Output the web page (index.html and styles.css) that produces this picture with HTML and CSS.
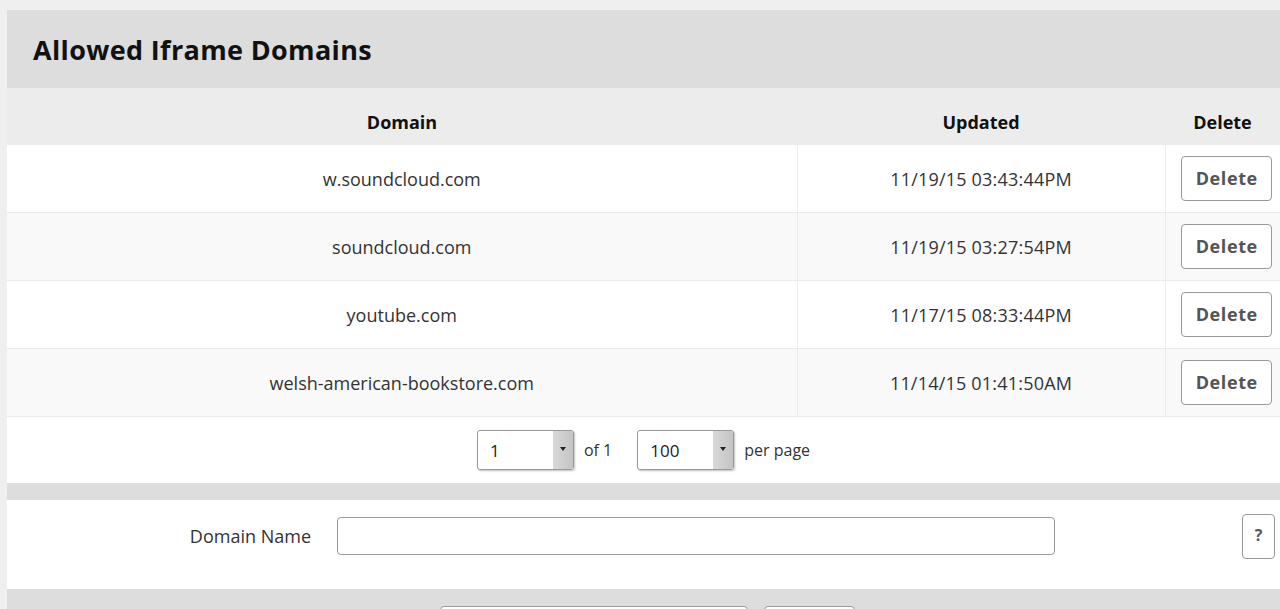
FILE: index.html
```html
<!DOCTYPE html>
<html lang="en">
<head>
    <meta charset="UTF-8">
    <meta name="viewport" content="width=device-width, initial-scale=1.0">
    <title>Allowed Iframe Domains</title>
    <link rel="stylesheet" href="styles.css">
</head>
<body>
    <div class="panel">
        <div class="panel-head">
            <h1>Allowed Iframe Domains</h1>
        </div>
        <table class="domain-table">
            <thead>
                <tr>
                    <th class="col-domain">Domain</th>
                    <th class="col-updated">Updated</th>
                    <th class="col-delete">Delete</th>
                </tr>
            </thead>
            <tbody>
                <tr>
                    <td>w.soundcloud.com</td>
                    <td>11/19/15 03:43:44PM</td>
                    <td><button class="btn">Delete</button></td>
                </tr>
                <tr>
                    <td>soundcloud.com</td>
                    <td>11/19/15 03:27:54PM</td>
                    <td><button class="btn">Delete</button></td>
                </tr>
                <tr>
                    <td>youtube.com</td>
                    <td>11/17/15 08:33:44PM</td>
                    <td><button class="btn">Delete</button></td>
                </tr>
                <tr>
                    <td>welsh-american-bookstore.com</td>
                    <td>11/14/15 01:41:50AM</td>
                    <td><button class="btn">Delete</button></td>
                </tr>
            </tbody>
        </table>
        <div class="pager">
            <div class="select"><span>1</span><span class="arrow"></span></div>
            <span class="pager-text">of 1</span>
            <div class="select"><span>100</span><span class="arrow"></span></div>
            <span class="pager-text">per page</span>
        </div>
        <div class="spacer"></div>
        <div class="form-row">
            <label for="domain-name">Domain Name</label>
            <input type="text" id="domain-name">
            <button class="btn btn-help">?</button>
        </div>
        <div class="actions">
            <div class="action-box wide"></div>
            <div class="action-box narrow"></div>
        </div>
    </div>
</body>
</html>
```

FILE: styles.css
```css
body {
    font-family: "Open Sans", Arial, sans-serif;
    background-color: #efefef;
    color: #333;
    margin: 0;
    padding: 10px 0 0 7px;
    overflow: hidden;
}
.panel {
    background-color: #fff;
}
.panel-head {
    background-color: #dddddd;
    height: 78px;
    display: flex;
    align-items: center;
    padding-left: 26px;
}
.panel-head h1 {
    margin: 0;
    font-size: 27px;
    font-weight: 700;
    letter-spacing: 0.35px;
    color: #111;
}
.domain-table {
    width: 100%;
    border-collapse: collapse;
}
.domain-table th {
    background-color: #ececec;
    height: 57px;
    font-size: 18px;
    font-weight: 700;
    color: #111;
    padding: 10px 0 0;
    vertical-align: middle;
    box-sizing: border-box;
}
.col-domain {
    width: 790px;
}
.col-updated {
    width: 368px;
}
.domain-table td {
    height: 67px;
    padding: 0;
    text-align: center;
    font-size: 18px;
    border-top: 1px solid #ebebeb;
    border-left: 1px solid #ebebeb;
}
.domain-table td:nth-child(2) {
    letter-spacing: 0.2px;
}
.domain-table td:first-child {
    border-left: none;
}
.domain-table tbody tr:first-child td {
    border-top: none;
}
.domain-table tbody tr:nth-child(even) td {
    background-color: #f9f9f9;
}
.btn {
    font-family: "Open Sans", Arial, sans-serif;
    font-size: 18px;
    font-weight: 700;
    color: #555;
    background-color: #fff;
    border: 1px solid #999;
    border-radius: 4px;
    padding: 0 0 2px;
    height: 45px;
    cursor: pointer;
}
.domain-table .btn {
    width: 91px;
    margin-left: 8px;
    letter-spacing: 0.6px;
}
.pager {
    height: 67px;
    border-top: 1px solid #ebebeb;
    display: flex;
    align-items: center;
    justify-content: center;
    padding-left: 10px;
    box-sizing: border-box;
}
.select {
    width: 97px;
    height: 40px;
    box-sizing: border-box;
    border: 1px solid #999;
    border-radius: 3px;
    display: flex;
    align-items: center;
    justify-content: space-between;
    font-size: 17px;
    color: #222;
    padding-left: 12px;
    overflow: hidden;
    box-shadow: 1px 1px 2px rgba(0, 0, 0, 0.25);
}
.select .arrow {
    width: 20px;
    align-self: stretch;
    background: linear-gradient(to right, #d8d8d8, #c4c4c4);
    position: relative;
}
.select .arrow::after {
    content: "";
    position: absolute;
    left: 7px;
    top: 16px;
    border-left: 3px solid transparent;
    border-right: 3px solid transparent;
    border-top: 4px solid #222;
}
.pager-text {
    font-size: 16px;
    margin: 0 10px;
}
.pager-text:nth-of-type(1) {
    margin-right: 25px;
}
.spacer {
    height: 17px;
    background-color: #dddddd;
}
.form-row {
    height: 89px;
    display: flex;
    align-items: center;
    padding-bottom: 17px;
    box-sizing: border-box;
}
.form-row label {
    width: 304px;
    text-align: right;
    font-size: 18px;
    color: #333;
}
.form-row input {
    margin-left: 26px;
    width: 718px;
    height: 38px;
    box-sizing: border-box;
    border: 1px solid #999;
    border-radius: 4px;
}
.btn-help {
    margin-left: auto;
    margin-right: 5px;
    width: 33px;
    height: 45px;
    font-size: 16px;
}
.actions {
    background-color: #dddddd;
    height: 40px;
    display: flex;
    padding: 17px 0 0 433px;
    box-sizing: border-box;
    gap: 16px;
}
.action-box {
    height: 40px;
    background-color: #fff;
    border: 1px solid #999;
    border-radius: 4px;
    box-sizing: border-box;
}
.action-box.wide {
    width: 308px;
}
.action-box.narrow {
    width: 91px;
}
```
